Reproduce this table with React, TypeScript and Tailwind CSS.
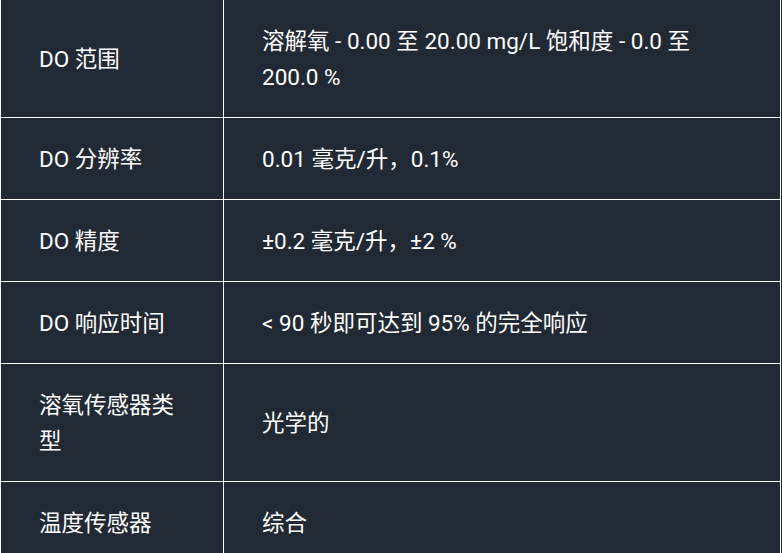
const rows: [string, string][] = [
  ["DO 范围", "溶解氧 - 0.00 至 20.00 mg/L 饱和度 - 0.0 至 200.0 %"],
  ["DO 分辨率", "0.01 毫克/升，0.1%"],
  ["DO 精度", "±0.2 毫克/升，±2 %"],
  ["DO 响应时间", "< 90 秒即可达到 95% 的完全响应"],
  ["溶氧传感器类型", "光学的"],
  ["温度传感器", "综合"],
];

export default function App() {
  return (
    <div
      className="w-[782px] h-[553px] overflow-hidden bg-[#212934]"
      style={{ fontFamily: 'Roboto, "Noto Sans CJK SC", sans-serif' }}
    >
      <div className="w-[781px] border-l border-r border-white text-white text-[22.5px] leading-[36px]">
        {rows.map(([k, v]) => (
          <div key={k} className="flex border-b border-white">
            <div className="w-[223px] shrink-0 border-r border-white px-[38px] pt-[23px] pb-[22px] flex items-center">
              {k}
            </div>
            <div className="flex-1 px-[38px] pt-[23px] pb-[22px] flex items-center">
              {v}
            </div>
          </div>
        ))}
      </div>
    </div>
  );
}
